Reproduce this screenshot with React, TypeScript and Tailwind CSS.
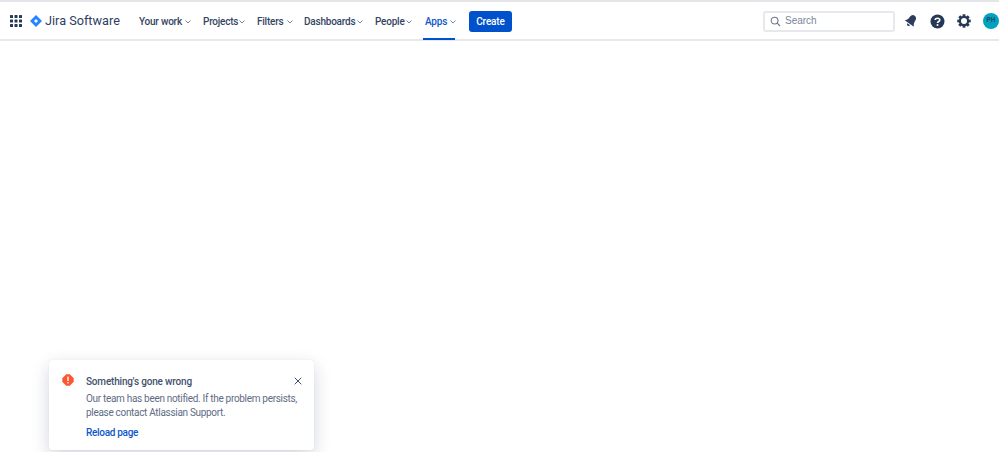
import React from "react";

const Chevron = () => (
  <svg width="6" height="6" viewBox="0 0 6 6" fill="none" className="ml-[3px] mr-[1px] mt-[1px] shrink-0">
    <path d="M0.5 1.5 L3 4 L5.5 1.5" stroke="currentColor" strokeWidth="0.9" opacity="0.75" />
  </svg>
);

function NavItem({ label, active, ml, w }: { label: string; active?: boolean; ml: string; w: string }) {
  return (
    <div className={`relative flex h-full items-center pt-[1px] ${ml} ${active ? "text-[#0c57c9]" : "text-[#344563]"}`}>
      <span className={`${w} whitespace-nowrap text-[10px] font-medium tracking-[-0.22px]`}>{label}</span>
      <Chevron />
      {active && <div className="absolute bottom-[-1px] left-[-2px] right-[2px] h-[2px] bg-[#0052cc]" />}
    </div>
  );
}

export default function App() {
  return (
    <div className="relative h-[452px] w-[999px] overflow-hidden bg-white font-['Roboto',sans-serif]">
      <div className="h-[2px] bg-[#e4e5e9]" />
      <header className="flex h-[39px] items-center border-b-2 border-[#e6e8ec] bg-white">
        <svg width="12" height="12" viewBox="0 0 12 12" className="ml-[10px] mt-[1px] shrink-0" fill="#253858">
          {[0, 4.5, 9].flatMap((y) =>
            [0, 4.5, 9].map((x) => <rect key={`${x}-${y}`} x={x} y={y} width="3" height="3" rx="0.5" />)
          )}
        </svg>
        <svg width="12" height="12" viewBox="0 0 12 12" className="ml-[8px] mt-[1px] shrink-0">
          <path d="M6 0 L12 6 L6 12 L0 6 Z" fill="#2684ff" />
          <path d="M6 4 L8 6 L6 8 L4 6 Z" fill="#ffffff" />
        </svg>
        <span className="ml-[3px] mt-[1px] w-[75px] whitespace-nowrap text-[12.7px] text-[#2e4063]">Jira Software</span>
        <NavItem label="Your work" ml="ml-[19px]" w="w-[43px]" />
        <NavItem label="Projects" ml="ml-[11px]" w="w-[33px]" />
        <NavItem label="Filters" ml="ml-[11px]" w="w-[27px]" />
        <NavItem label="Dashboards" ml="ml-[10px]" w="w-[50px]" />
        <NavItem label="People" ml="ml-[11px]" w="w-[28px]" />
        <NavItem label="Apps" ml="ml-[12px]" w="w-[22px]" active />
        <button className="ml-[12px] mt-[1px] flex h-[21px] w-[43px] items-center justify-center rounded-[3px] bg-[#0052cc] text-[10px] font-medium tracking-[-0.15px] text-white">
          Create
        </button>
        <div className="ml-auto mt-[1px] flex items-center">
          <div className="flex h-[21px] w-[132px] items-center rounded-[3px] border-2 border-[#e6e8ec] bg-white pl-[5px]">
            <svg width="11" height="11" viewBox="0 0 11 11" fill="none" stroke="#6b778c" strokeWidth="1.1">
              <circle cx="4.6" cy="4.6" r="3.4" />
              <path d="M7.2 7.2 L10 10" />
            </svg>
            <span className="ml-[4px] mt-[-1px] font-['Liberation_Sans',sans-serif] text-[10px] text-[#7a869a]">Search</span>
          </div>
          <svg width="14" height="14" viewBox="0 0 14 14" className="ml-[9px]" fill="#2b3d5e">
            <g transform="rotate(35 7 7)">
              <path d="M7 0.5 C9.4 0.5 10.4 2.6 10.4 5 C10.4 7.4 11.4 8.6 12.6 10 H1.4 C2.6 8.6 3.6 7.4 3.6 5 C3.6 2.6 4.6 0.5 7 0.5 Z" />
              <path d="M5.2 11 H8.8 C8.6 13.4 5.4 13.4 5.2 11 Z" />
            </g>
          </svg>
          <svg width="15" height="15" viewBox="0 0 15 15" className="ml-[12px]">
            <circle cx="7.5" cy="7.5" r="7" fill="#253858" />
            <path d="M5.2 6 C5.2 3.6 9.8 3.6 9.8 6 C9.8 7.6 7.5 7.4 7.5 9" fill="none" stroke="#fff" strokeWidth="1.6" />
            <circle cx="7.5" cy="11" r="1" fill="#fff" />
          </svg>
          <svg width="14" height="14" viewBox="0 0 14 14" className="ml-[12px]" fill="none">
            <circle cx="7" cy="7" r="4.1" stroke="#253858" strokeWidth="2.2" />
            {[0, 45, 90, 135, 180, 225, 270, 315].map((a) => (
              <rect key={a} x="5.6" y="0.3" width="2.8" height="2.6" fill="#253858" transform={`rotate(${a} 7 7)`} />
            ))}
          </svg>
          <div className="ml-[12px] flex h-[16px] w-[16px] items-center justify-center rounded-full bg-[#00a3bf] text-[6.5px] font-bold text-[#1d4a6e]">
            PH
          </div>
        </div>
      </header>

      <div className="absolute left-[49px] top-[360px] h-[90px] w-[265px] rounded-[3px] bg-white shadow-[0_6px_18px_rgba(9,30,66,0.18),0_0_1px_rgba(9,30,66,0.15)]">
        <div className="flex">
          <svg width="12" height="12" viewBox="0 0 12 12" className="ml-[13px] mt-[14px] shrink-0">
            <path d="M4.2 0.3 H7.8 L11.7 4.2 V7.8 L7.8 11.7 H4.2 L0.3 7.8 V4.2 Z" fill="#ff5630" />
            <rect x="5.3" y="2.6" width="1.4" height="4.4" fill="#fff" />
            <rect x="5.3" y="8" width="1.4" height="1.4" fill="#fff" />
          </svg>
          <div className="ml-[12px] mt-[14px] flex-1">
            <div className="flex items-center justify-between pr-[12px]">
              <span className="text-[10px] leading-[16px] font-medium tracking-[-0.18px] text-[#42526e]">Something's gone wrong</span>
              <svg width="8" height="8" viewBox="0 0 8 8" stroke="#42526e" strokeWidth="1" className="mt-[-3px]">
                <path d="M0.7 0.7 L7.3 7.3 M7.3 0.7 L0.7 7.3" />
              </svg>
            </div>
            <p className="mt-[2px] w-[225px] text-[10px] leading-[13.5px] tracking-[-0.31px] text-[#5e6c84]">
              Our team has been notified. If the problem persists, please contact Atlassian Support.
            </p>
            <div className="mt-[6px] text-[10px] leading-[16px] font-medium tracking-[-0.3px] text-[#0c57c9]">Reload page</div>
          </div>
        </div>
      </div>
    </div>
  );
}
